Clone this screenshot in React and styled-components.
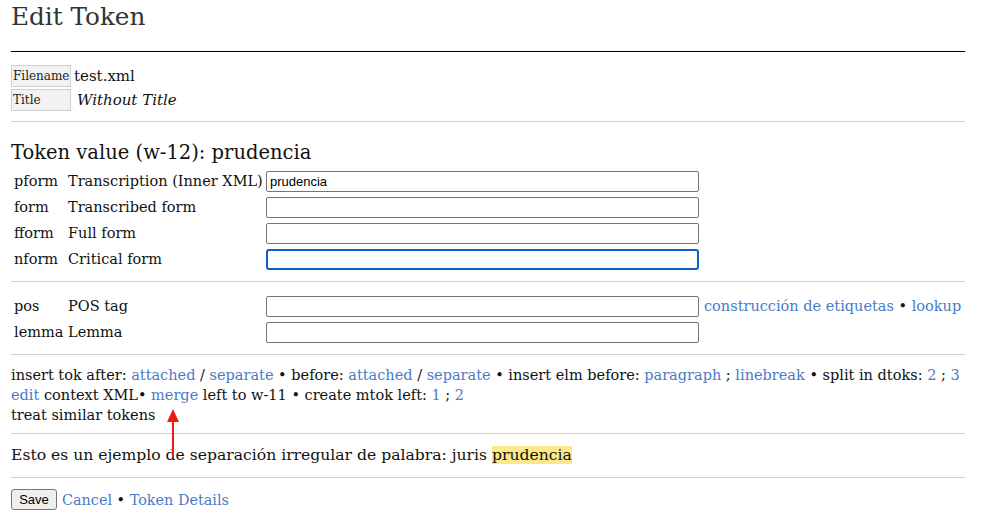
import React from "react"
import styled, { createGlobalStyle } from "styled-components"

const GlobalStyle = createGlobalStyle`
  body {
    margin: 0;
    background: #fff;
    color: #111;
    font-family: "DejaVu Serif", "Liberation Serif", serif;
    font-size: 14.5px;
  }
`

const Page = styled.div`
  position: relative;
  width: 954px;
  padding: 0 11px;
`

const Title = styled.h1`
  margin: 2px 0 0;
  height: 30px;
  font-size: 24.7px;
  line-height: 30px;
  font-weight: normal;
  color: #333;
`

const Rule = styled.hr`
  margin: ${({ top }) => top}px 0 0;
  border: 0;
  border-top: 1px solid ${({ dark }) => (dark ? "#000" : "#d0d0d0")};
  height: 0;
`

const MetaTable = styled.table`
  margin-top: 11px;
  border-spacing: 2px;
  margin-left: -2px;
`

const MetaKey = styled.td`
  width: 57px;
  height: 20px;
  padding: 0 0 0 1px;
  background: #f2f2f2;
  border: 1px solid #d0d0d0;
  font-size: 12px;
  color: #222;
`

const MetaValue = styled.td`
  padding: 0 1px;
  font-size: 15px;
  font-style: ${({ italic }) => (italic ? "italic" : "normal")};
  padding-left: ${({ italic }) => (italic ? "4px" : "1px")};
`

const Heading = styled.h2`
  margin: 19px 0 0;
  font-size: 19.5px;
  line-height: 24px;
  font-weight: normal;
  color: #111;
`

const FormTable = styled.table`
  margin-top: ${({ top }) => top}px;
  border-collapse: collapse;
  table-layout: fixed;
  width: 954px;
  font-size: 14.5px;
`

const Row = styled.tr`
  height: 26px;
`

const Code = styled.td`
  width: 54px;
  padding: 0 0 0 3px;
  white-space: nowrap;
`

const Label = styled.td`
  width: 198px;
  padding: 0;
  white-space: nowrap;
`

const Field = styled.td`
  padding: 0;
  white-space: nowrap;
`

const Input = styled.input`
  box-sizing: border-box;
  width: 433px;
  height: 21px;
  margin: 0;
  padding: 1px 3px;
  vertical-align: middle;
  font-family: "Liberation Sans", Arial, sans-serif;
  font-size: 13px;
  color: #000;
  border: ${({ focused }) => (focused ? "2px solid #0b5fc9" : "1px solid #767676")};
  border-radius: ${({ focused }) => (focused ? "3px" : "2px")};
  outline: none;
  background: #fff;
`

const Extra = styled.span`
  margin-left: 5px;
  vertical-align: middle;
`

const Link = styled.a`
  color: #4a7bc6;
  text-decoration: none;
  cursor: pointer;
`

const Actions = styled.div`
  margin-top: 10px;
  font-size: 14.5px;
  line-height: 20px;
  white-space: nowrap;
`

const Sentence = styled.div`
  margin-top: 11px;
  font-size: 15.6px;
  line-height: 21px;
`

const Mark = styled.span`
  background: #fde98c;
`

const Footer = styled.div`
  margin-top: 11px;
  display: flex;
  align-items: center;
  gap: 5px;
  font-size: 14.4px;
`

const Button = styled.button`
  height: 21px;
  width: 46px;
  padding: 0;
  font-family: "Liberation Sans", Arial, sans-serif;
  font-size: 13px;
  color: #000;
  background: #efefef;
  border: 1px solid #767676;
  border-radius: 3px;
`

const Arrow = styled.svg`
  position: absolute;
  left: 166px;
  top: 406px;
`

const fields = [
  ["pform", "Transcription (Inner XML)", "prudencia"],
  ["form", "Transcribed form", ""],
  ["fform", "Full form", ""],
  ["nform", "Critical form", "", true],
]

const Columns = () => (
  <colgroup>
    <col style={{ width: 57 }} />
    <col style={{ width: 198 }} />
    <col />
  </colgroup>
)

export default function App() {
  return (
    <Page>
      <GlobalStyle />
      <Title>Edit Token</Title>
      <Rule dark top={19} />
      <MetaTable>
        <tbody>
          <tr>
            <MetaKey>Filename</MetaKey>
            <MetaValue>test.xml</MetaValue>
          </tr>
          <tr>
            <MetaKey>Title</MetaKey>
            <MetaValue italic>Without Title</MetaValue>
          </tr>
        </tbody>
      </MetaTable>
      <Rule top={8} />
      <Heading>Token value (w-12): prudencia</Heading>
      <FormTable top={3}>
        <Columns />
        <tbody>
          {fields.map(([code, label, value, focused]) => (
            <Row key={code}>
              <Code>{code}</Code>
              <Label>{label}</Label>
              <Field>
                <Input defaultValue={value} focused={focused} />
              </Field>
            </Row>
          ))}
        </tbody>
      </FormTable>
      <Rule top={9} />
      <FormTable top={11}>
        <Columns />
        <tbody>
          <Row>
            <Code>pos</Code>
            <Label>POS tag</Label>
            <Field>
              <Input />
              <Extra>
                <Link>construcción de etiquetas</Link> • <Link>lookup</Link>
              </Extra>
            </Field>
          </Row>
          <Row>
            <Code>lemma</Code>
            <Label>Lemma</Label>
            <Field>
              <Input />
            </Field>
          </Row>
        </tbody>
      </FormTable>
      <Rule top={9} />
      <Actions>
        <div>
          insert tok after: <Link>attached</Link> / <Link>separate</Link> • before:{" "}
          <Link>attached</Link> / <Link>separate</Link> • insert elm before:{" "}
          <Link>paragraph</Link> ; <Link>linebreak</Link> • split in dtoks: <Link>2</Link> ;{" "}
          <Link>3</Link>
        </div>
        <div>
          <Link>edit</Link> context XML• <Link>merge</Link> left to w-11 • create mtok left:{" "}
          <Link>1</Link> ; <Link>2</Link>
        </div>
        <div>treat similar tokens</div>
      </Actions>
      <Rule top={8} />
      <Sentence>
        Esto es un ejemplo de separación irregular de palabra: juris <Mark>prudencia</Mark>
      </Sentence>
      <Rule top={11} />
      <Footer>
        <Button>Save</Button>
        <span>
          <Link>Cancel</Link> • <Link>Token Details</Link>
        </span>
      </Footer>
      <Arrow width="14" height="48" viewBox="0 0 14 48">
        <polygon points="7,1 13,14 1,14" fill="#f01a14" />
        <rect x="6" y="13" width="2" height="34" fill="#f01a14" />
      </Arrow>
    </Page>
  )
}
